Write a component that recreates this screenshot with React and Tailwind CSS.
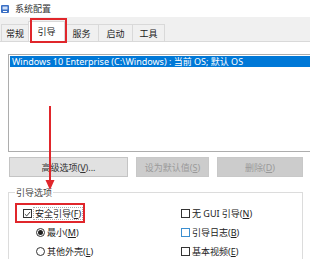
import React from "react";

const F = "font-['Noto_Sans','Noto_Sans_CJK_SC',sans-serif]";

function CheckBox({ checked, hover }) {
  return (
    <span
      className={`inline-flex w-[9px] h-[9px] border ${hover ? "border-[#3c8fd0]" : "border-[#333]"} bg-white items-center justify-center shrink-0`}
    >
      {checked && (
        <svg width="8" height="8" viewBox="0 0 8 8">
          <path d="M1 4.2 L3.1 6.2 L7 1.6" fill="none" stroke="#222" strokeWidth="1" />
        </svg>
      )}
    </span>
  );
}

function Radio({ checked }) {
  return (
    <span className="inline-flex w-[9px] h-[9px] rounded-full border border-[#333] bg-white items-center justify-center shrink-0">
      {checked && <span className="w-[5px] h-[5px] rounded-full bg-[#222]" />}
    </span>
  );
}

function U({ children }) {
  return <span className="underline underline-offset-1">{children}</span>;
}

export default function App() {
  return (
    <div className={`relative w-[310px] h-[259px] overflow-hidden bg-white text-[9px] leading-none text-[#222] ${F}`}>
      {/* title bar */}
      <div className="h-[17px] flex items-center gap-[5px] pl-[1px] bg-white">
        <svg width="9" height="10" viewBox="0 0 9 10">
          <rect x="0" y="1" width="8" height="8" rx="1" fill="#3a6fc4" />
          <rect x="1.5" y="2.5" width="5" height="3" fill="#cfe0f8" />
          <rect x="2" y="7" width="4" height="1" fill="#fff" />
        </svg>
        <span className="text-[9px] text-[#333]">系统配置</span>
      </div>

      {/* tab strip */}
      <div className="h-[24px] bg-[#f0f0f0] flex items-end pl-[1px]">
        <div className="h-[17px] w-[28px] flex items-center justify-center border border-b-0 border-[#d9d9d9] bg-[#f0f0f0]">常规</div>
        <div className="h-[20px] w-[37px] flex items-center justify-center border border-b-0 border-[#d9d9d9] bg-white -ml-[1px] relative z-10">引导</div>
        <div className="h-[17px] w-[35px] flex items-center justify-center border border-b-0 border-[#d9d9d9] bg-[#f0f0f0] -ml-[1px]">服务</div>
        <div className="h-[17px] w-[35px] flex items-center justify-center border border-b-0 border-[#d9d9d9] bg-[#f0f0f0] -ml-[1px]">启动</div>
        <div className="h-[17px] w-[33px] flex items-center justify-center border border-b-0 border-[#d9d9d9] bg-[#f0f0f0] -ml-[1px]">工具</div>
      </div>

      {/* tab page */}
      <div className="border-t border-[#d9d9d9] bg-white pl-[8px] pt-[12px]">
        {/* list box */}
        <div className="w-[310px] h-[98px] border border-[#adadad] p-[1px] bg-white">
          <div className="h-[11px] bg-[#0078d7] text-white flex items-center pl-[2px] whitespace-nowrap">
            Windows 10 Enterprise (C:\Windows) : 当前 OS; 默认 OS
          </div>
        </div>

        {/* buttons */}
        <div className="flex gap-[8px] mt-[5px] ml-[1px]">
          <div className="w-[119px] h-[20px] bg-[#e1e1e1] border border-[#c4c4c4] flex items-center justify-center text-[#333]">
            高级选项(<U>V</U>)...
          </div>
          <div className="w-[73px] h-[20px] bg-[#cccccc] border border-[#c8c8c8] flex items-center justify-center text-[#9a9a9a]">
            设为默认值(<U>S</U>)
          </div>
          <div className="w-[86px] h-[20px] bg-[#cccccc] border border-[#c8c8c8] flex items-center justify-center text-[#9a9a9a]">
            删除(<U>D</U>)
          </div>
        </div>

        {/* group box */}
        <div className="relative mt-[15px] w-[295px] h-[80px] border border-[#dcdcdc]">
          <span className="absolute -top-[5px] left-[6px] bg-white px-[1px] text-[#444]">引导选项</span>
          <div className="grid grid-cols-[158px_1fr] auto-rows-[19px] items-center pl-[14px] pt-[11px]">
            <div className="flex items-center gap-[1px]">
              <CheckBox checked />
              <span className="border border-dotted border-[#aaa] px-[1px] py-[1px]">安全引导(<U>F</U>)</span>
            </div>
            <div className="flex items-center gap-[2px]">
              <CheckBox />
              <span>无 GUI 引导(<U>N</U>)</span>
            </div>
            <div className="flex items-center gap-[2px] pl-[13px]">
              <Radio checked />
              <span>最小(<U>M</U>)</span>
            </div>
            <div className="flex items-center gap-[2px]">
              <CheckBox hover />
              <span>引导日志(<U>B</U>)</span>
            </div>
            <div className="flex items-center gap-[2px] pl-[13px]">
              <Radio />
              <span>其他外壳(<U>L</U>)</span>
            </div>
            <div className="flex items-center gap-[2px]">
              <CheckBox />
              <span>基本视频(<U>E</U>)</span>
            </div>
          </div>
        </div>
      </div>

      {/* annotations */}
      <div className="absolute left-[30px] top-[18px] w-[37px] h-[25px] border-2 border-[#e0262b] z-20" />
      <div className="absolute left-[15px] top-[203px] w-[70px] h-[20px] border-2 border-[#e0262b] z-20" />
      <svg className="absolute left-[44px] top-[106px] z-20" width="12" height="86" viewBox="0 0 12 86">
        <line x1="6" y1="0" x2="6" y2="78" stroke="#e0262b" strokeWidth="2" />
        <path d="M1.5 74 L6 84 L10.5 74 Z" fill="#e0262b" />
      </svg>
    </div>
  );
}
